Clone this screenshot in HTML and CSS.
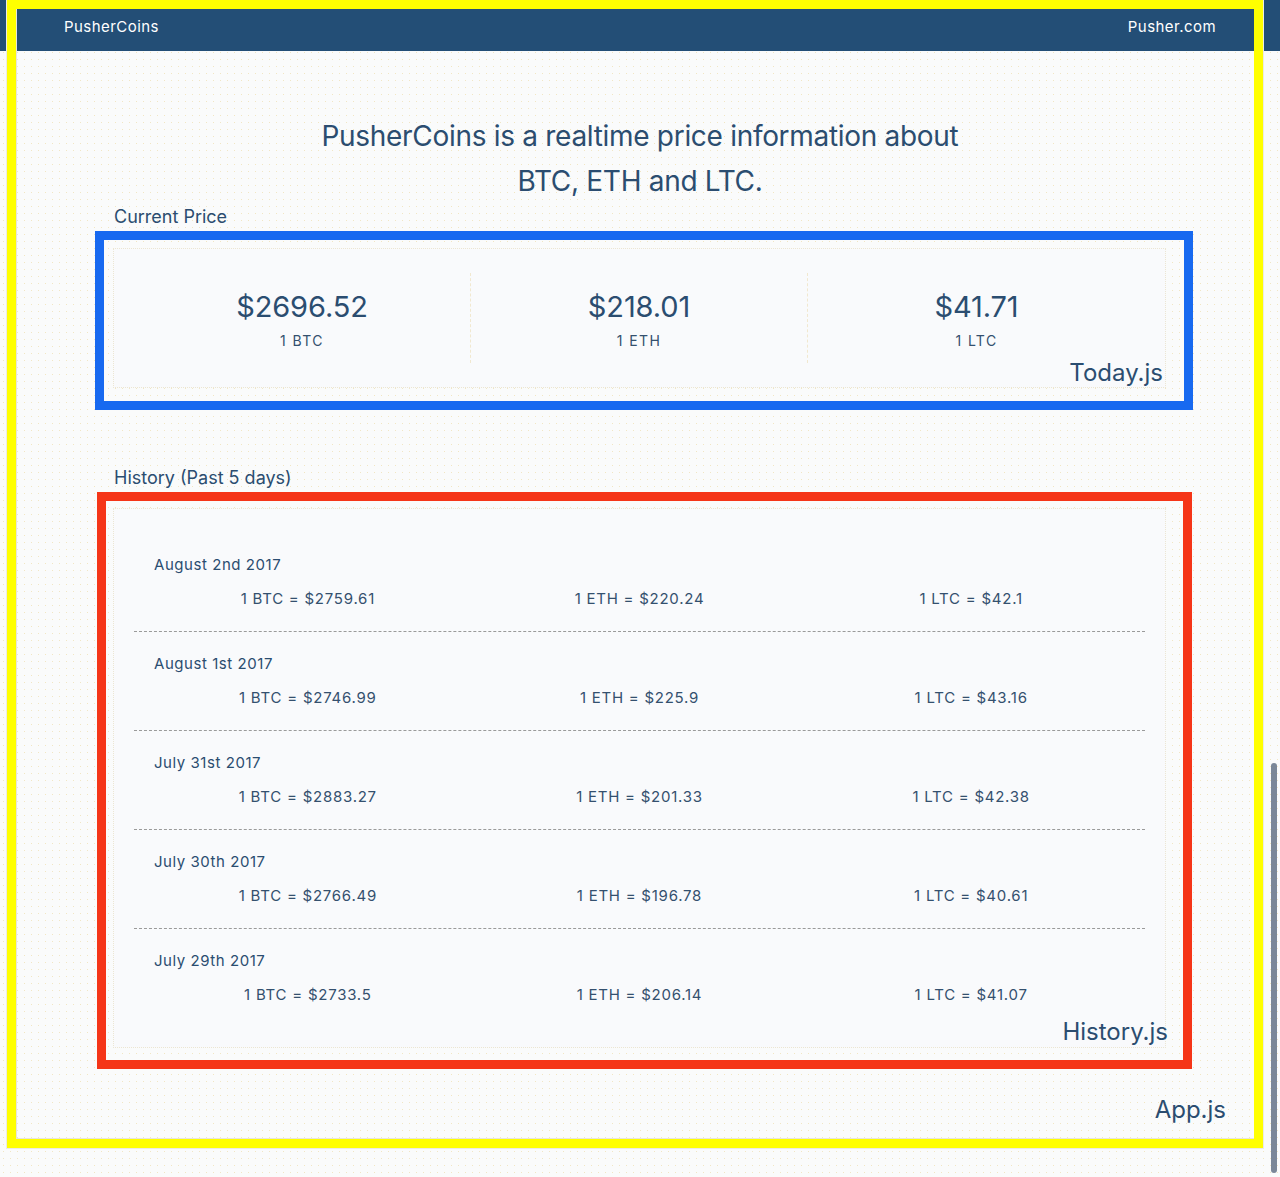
FILE: index.html
```html
<!DOCTYPE html>
<html lang="en">
<head>
<meta charset="utf-8">
<title>PusherCoins</title>
<link rel="stylesheet" href="styles.css">
</head>
<body>
<nav class="navbar">
  <span class="brand">PusherCoins</span>
  <span class="nav-link">Pusher.com</span>
</nav>
<main class="app">
  <h1 class="intro">PusherCoins is a realtime price information about<br>BTC, ETH and LTC.</h1>

  <h2 class="section-title">Current Price</h2>
  <section class="frame frame-today">
    <div class="card today-card">
      <div class="today-row">
        <div class="today-col"><div class="price">$2696.52</div><div class="coin">1 BTC</div></div>
        <div class="today-col"><div class="price">$218.01</div><div class="coin">1 ETH</div></div>
        <div class="today-col"><div class="price">$41.71</div><div class="coin">1 LTC</div></div>
      </div>
    </div>
    <span class="file-label label-today">Today.js</span>
  </section>

  <h2 class="section-title history-title">History (Past 5 days)</h2>
  <section class="frame frame-history">
    <div class="card history-card">
      <div class="history-row">
        <div class="date">August 2nd 2017</div>
        <div class="values"><span>1 BTC = $2759.61</span><span>1 ETH = $220.24</span><span>1 LTC = $42.1</span></div>
      </div>
      <div class="history-row">
        <div class="date">August 1st 2017</div>
        <div class="values"><span>1 BTC = $2746.99</span><span>1 ETH = $225.9</span><span>1 LTC = $43.16</span></div>
      </div>
      <div class="history-row">
        <div class="date">July 31st 2017</div>
        <div class="values"><span>1 BTC = $2883.27</span><span>1 ETH = $201.33</span><span>1 LTC = $42.38</span></div>
      </div>
      <div class="history-row">
        <div class="date">July 30th 2017</div>
        <div class="values"><span>1 BTC = $2766.49</span><span>1 ETH = $196.78</span><span>1 LTC = $40.61</span></div>
      </div>
      <div class="history-row">
        <div class="date">July 29th 2017</div>
        <div class="values"><span>1 BTC = $2733.5</span><span>1 ETH = $206.14</span><span>1 LTC = $41.07</span></div>
      </div>
    </div>
    <span class="file-label label-history">History.js</span>
  </section>

  <div class="app-label">App.js</div>
</main>
<div class="app-frame"></div>
<div class="scrollbar"></div>
</body>
</html>
```
FILE: styles.css
```css
* { box-sizing: border-box; }

html, body {
  margin: 0;
  padding: 0;
}

body {
  position: relative;
  min-height: 1177px;
  overflow: hidden;
  font-family: Inter, "Open Sans", "Liberation Sans", sans-serif;
  color: #2b4d70;
  background-color: #fafbfb;
  background-image: radial-gradient(circle, #f1e6c4 0.6px, transparent 1px);
  background-size: 7px 7px;
}

.navbar {
  height: 51px;
  padding: 2px 64px 0;
  display: flex;
  align-items: center;
  justify-content: space-between;
  background: #234e76;
  color: #ffffff;
  font-size: 15px;
  letter-spacing: 0.45px;
}

.app {
  padding: 0 54px 0 95px;
}

.intro {
  width: 1090px;
  margin: 63px 0 0;
  font-size: 28px;
  font-weight: 400;
  line-height: 45px;
  letter-spacing: -0.3px;
  text-align: center;
  color: #2b4d70;
}

.section-title {
  margin: 3px 0 3px;
  padding-left: 19px;
  font-size: 18px;
  font-weight: 400;
  line-height: 22px;
  color: #2b4d70;
}

.intro + .section-title {
  margin-top: 2px;
  margin-bottom: 3px;
}

.history-title {
  margin-top: 57px;
}

.frame {
  position: relative;
  border: 9px solid #1769f0;
}

.frame-today {
  width: 1098px;
  padding: 8px 18px 13px 9px;
}

.frame-history {
  width: 1095px;
  margin-left: 2px;
  padding: 7px 17px 12px 7px;
  border-color: #f53518;
}

.card {
  background: #f9fafc;
  border: 1px dotted #ece6d2;
}

.today-card {
  padding: 24px 20px;
}

.today-row {
  display: grid;
  grid-template-columns: repeat(3, 1fr);
  height: 90px;
}

.today-col {
  padding-top: 16px;
  text-align: center;
  border-right: 1px dashed #f1e8cf;
}

.today-col:last-child {
  border-right: none;
}

.price {
  font-size: 29px;
  line-height: 36px;
  letter-spacing: -0.1px;
  color: #2b4d70;
}

.coin {
  margin-top: 6px;
  font-size: 14px;
  line-height: 20px;
  letter-spacing: 1.4px;
  color: #34506e;
}

.history-card {
  padding: 24px 20px 20px;
}

.history-row {
  padding: 22px 0;
  border-bottom: 1px dashed #9a9a9a;
}

.history-row:last-child {
  border-bottom: none;
}

.date {
  padding-left: 20px;
  font-size: 15px;
  line-height: 20px;
  letter-spacing: 0.55px;
  color: #2b4d70;
}

.values {
  display: grid;
  grid-template-columns: repeat(3, 1fr);
  margin: 14px 8px 0;
  font-size: 15px;
  line-height: 20px;
  letter-spacing: 0.75px;
  text-align: center;
  color: #34506e;
}

.file-label {
  position: absolute;
  font-size: 24px;
  line-height: 24px;
  color: #2b4d70;
}

.label-today {
  right: 21px;
  bottom: 16px;
}

.label-history {
  right: 15px;
  bottom: 16px;
}

.app-label {
  margin-top: 27px;
  font-size: 24px;
  line-height: 28px;
  text-align: right;
  color: #2b4d70;
}

.app-frame {
  position: absolute;
  top: 0;
  left: 7px;
  width: 1256px;
  height: 1148px;
  border: 9px solid #ffff00;
  box-shadow: inset 1px 0 0 #e6e4dc, inset 0 -1px 0 #e6e4dc, 0 0 0 1px #ecebe4;
  pointer-events: none;
}

.scrollbar {
  position: absolute;
  top: 763px;
  left: 1271px;
  width: 6px;
  height: 410px;
  border-radius: 3px;
  background: #7b8798;
  pointer-events: none;
}
```
